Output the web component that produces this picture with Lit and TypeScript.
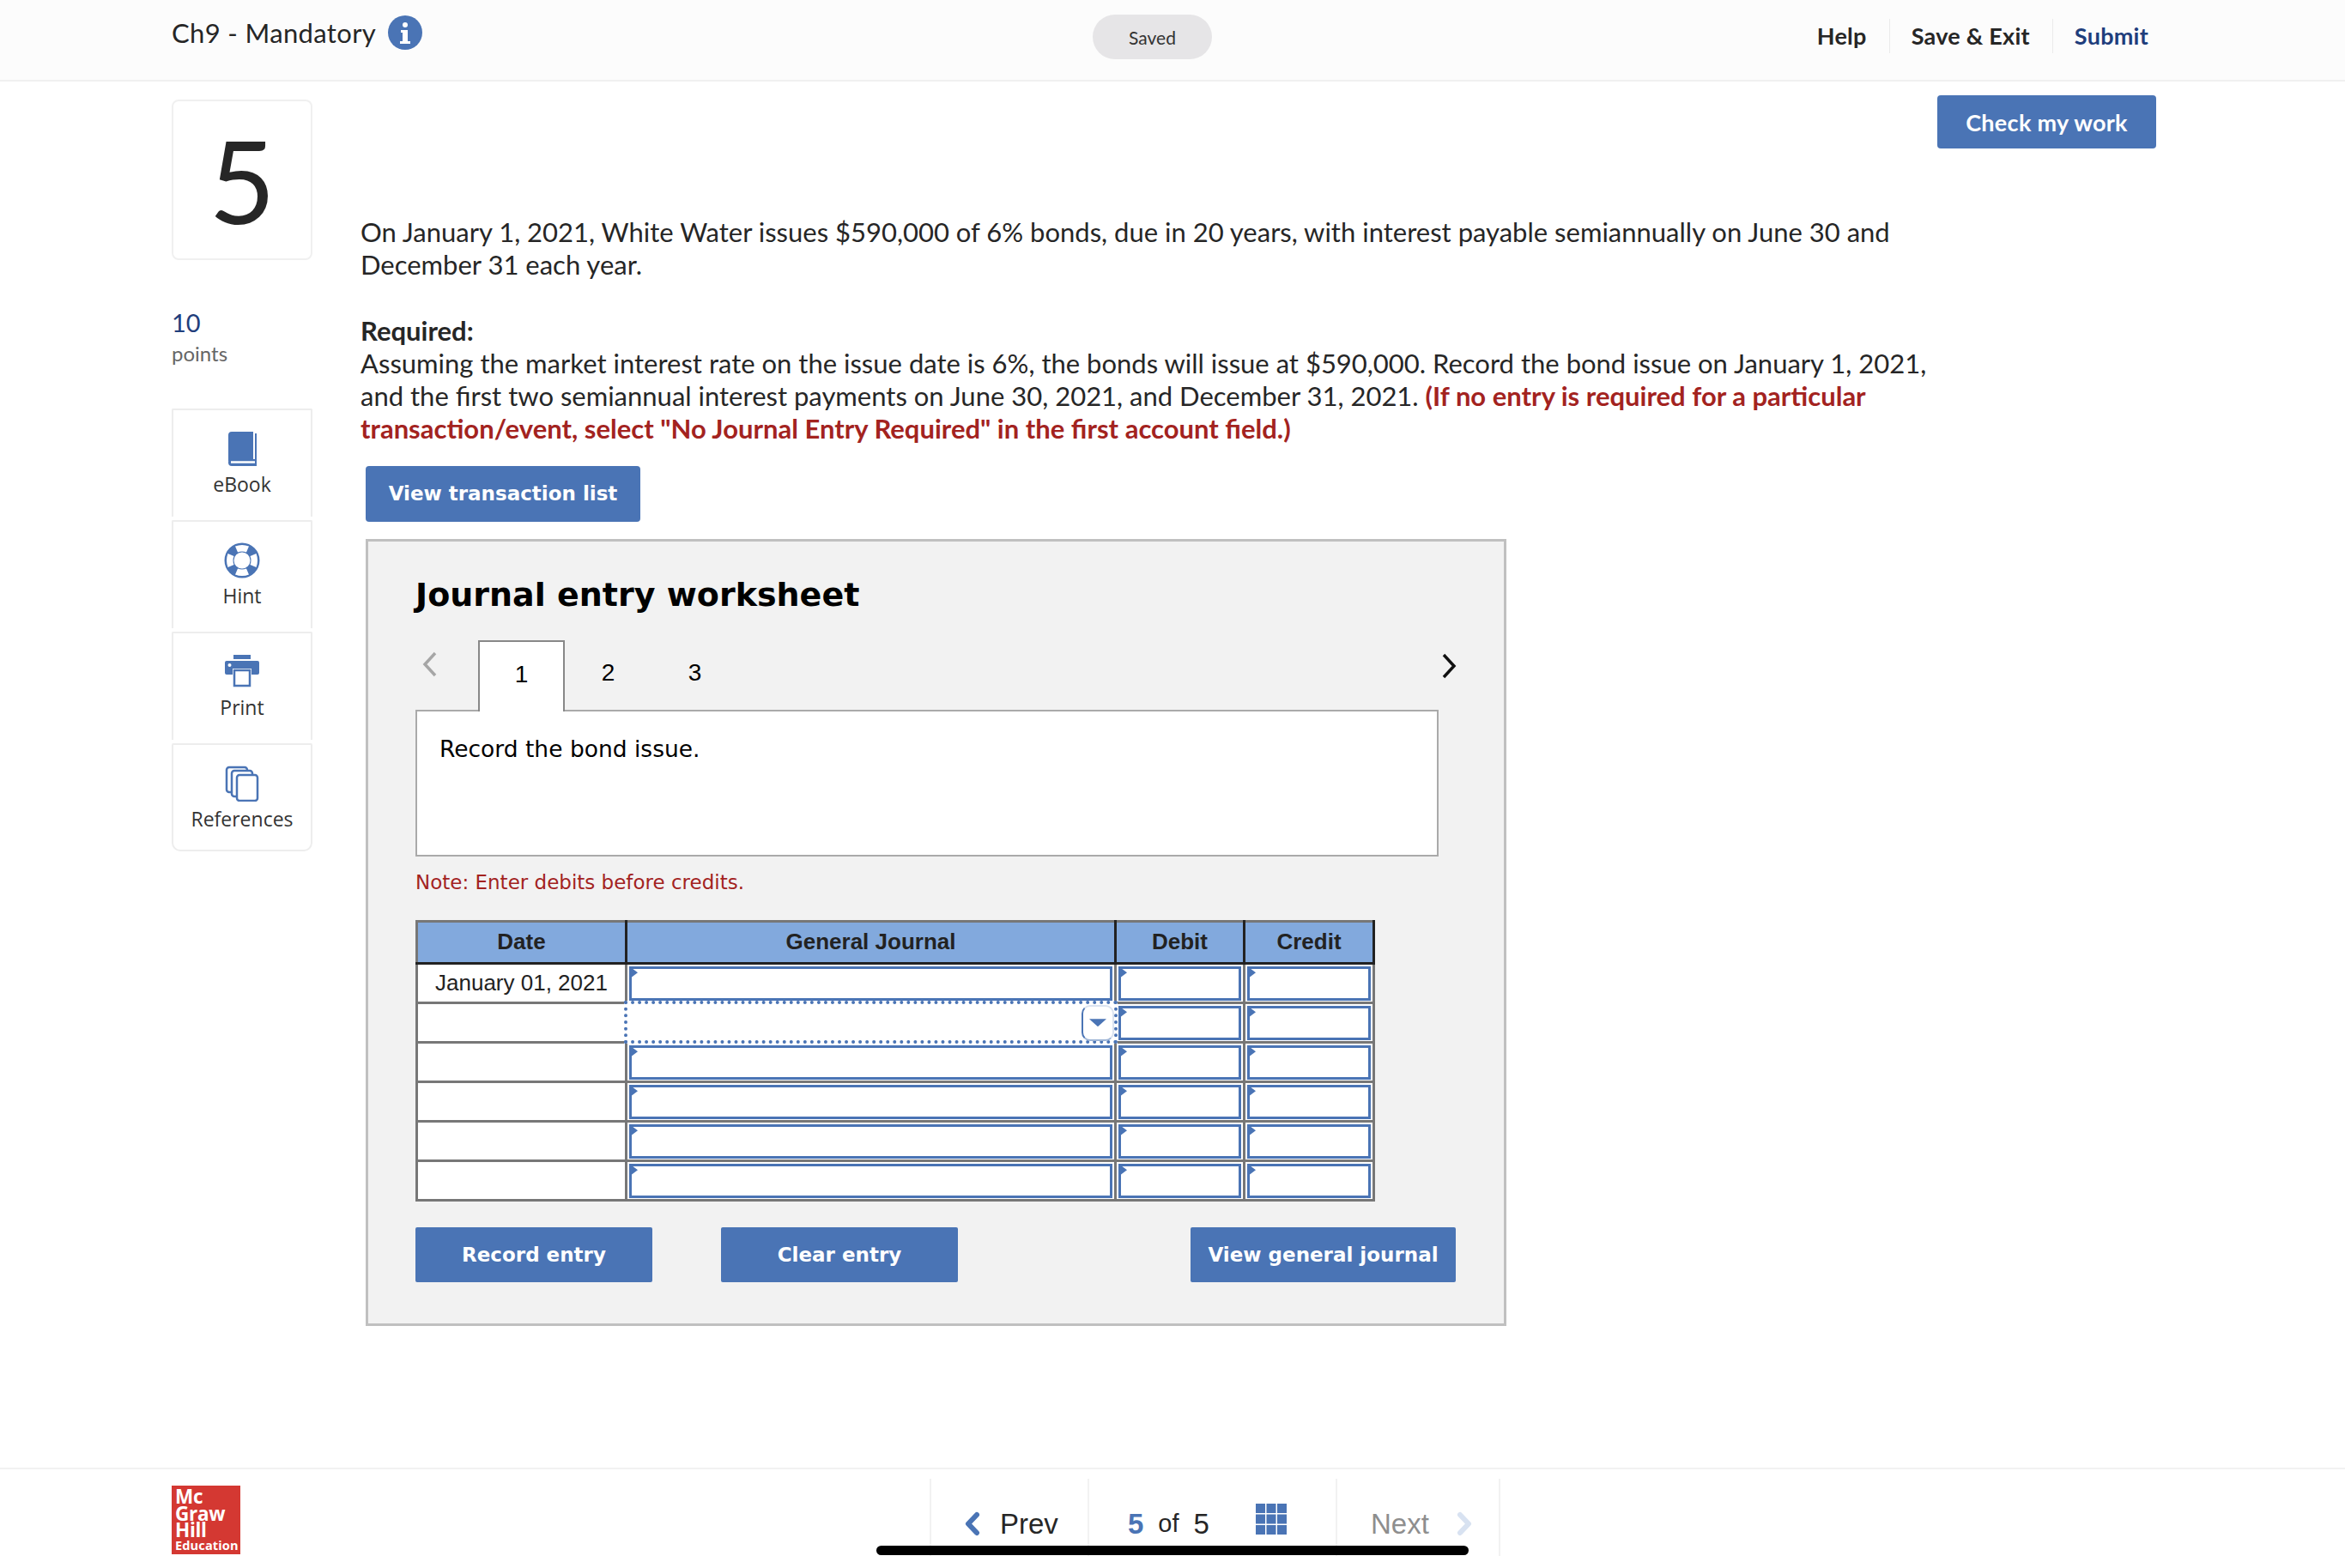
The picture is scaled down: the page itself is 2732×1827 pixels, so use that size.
import { LitElement, html, css, svg } from "lit";
import { customElement } from "lit/decorators.js";

const BLUE = "#4a74b5";
const rows = [0, 1, 2, 3, 4, 5];

@customElement("app-root")
export class AppRoot extends LitElement {
  static styles = css`
    :host { --b: #4a74b5; display: flex; flex-direction: column; width: 2732px; height: 1827px; overflow: hidden; background: #fff; position: relative; font-family: Lato, "Liberation Sans", sans-serif; color: #262626; }
    * { box-sizing: border-box; }
    header { height: 95px; flex: none; background: #fcfcfc; border-bottom: 2px solid #f0f0f0; display: grid; grid-template-columns: 1073px 139px 1fr; padding-left: 200px; padding-top: 17px; align-items: start; }
    .title { display: flex; align-items: center; gap: 14px; font-size: 31px; height: 49px; letter-spacing: 0.35px; margin-top: -4px; }
    .title svg { width: 40px; height: 40px; }
    .saved { height: 52px; border-radius: 26px; background: #e6e5e7; font-size: 21px; display: flex; align-items: center; justify-content: center; color: #333; }
    .hnav { display: flex; justify-content: flex-end; padding-right: 229px; padding-top: 10px; font-size: 27px; font-weight: 700; align-items: center; height: 40px; }
    .hnav span { padding: 0 26px 0 25px; height: 40px; line-height: 40px; border-left: 1px solid #ebebeb; letter-spacing: .25px; }
    .hnav span:first-child { border-left: 0; }
    .hnav span:last-child { color: #1f3e7c; padding-right: 0; }
    main { flex: 1; display: flex; padding-left: 200px; min-height: 0; }
    aside { width: 164px; flex: none; padding-top: 21px; display: flex; flex-direction: column; }
    .num { height: 187px; border: 2px solid #f0f0f0; border-radius: 8px; display: flex; align-items: center; justify-content: center; font-size: 134px; line-height: 1; font-family: Lato, sans-serif; }
    .pts { margin-top: 55px; font-size: 29px; color: #1f3e7c; line-height: 36px; }
    .ptl { font-size: 24px; color: #666; line-height: 36px; }
    .tools { margin-top: 46px; display: flex; flex-direction: column; gap: 4px; }
    .tool { height: 126px; border: 2px solid #ededed; border-bottom: 0; display: flex; flex-direction: column; align-items: center; padding-top: 24px; font-size: 23px; font-family: "Open Sans", sans-serif; color: #333; border-radius: 2px 2px 0 0; }
    .tool:last-child { border-bottom: 2px solid #ededed; border-radius: 2px 2px 10px 10px; }
    .tool svg { width: 42px; height: 42px; flex: none; }
    .tool div { margin-top: 4px; line-height: 32px; }
    .body { width: 2092px; margin-left: 56px; position: relative; }
    .top { display: flex; justify-content: flex-end; padding-top: 16px; height: 156px; padding-right: 0; }
    .check { width: 255px; height: 62px; background: var(--b); color: #fff; border-radius: 4px; font-size: 27px; font-weight: 700; display: flex; align-items: center; justify-content: center; letter-spacing: .3px; }
    p { margin: 0; font-size: 31px; line-height: 38.3px; }
    .q { margin-bottom: 38px; }
    .red { color: #a3231f; font-weight: 700; }
    .vt { margin: 24px 0 20px 6px; width: 320px; height: 65px; background: var(--b); color: #fff; border-radius: 4px; font: 700 23px "DejaVu Sans", sans-serif; display: flex; align-items: center; justify-content: center; }
    .panel { margin-left: 6px; width: 1329px; height: 917px; background: #f2f2f2; border: 3px solid #c0c0c0; padding: 0 0 0 55px; font-family: "DejaVu Sans", sans-serif; color: #000; display: flex; flex-direction: column; }
    h2 { margin: 38px 0 0; font-size: 38px; line-height: 48px; font-weight: 700; height: 48px; }
    .tabs { margin-top: 29px; height: 81px; display: flex; align-items: flex-start; position: relative; z-index: 1; font-family: "Liberation Sans", sans-serif; font-size: 28px; }
    .chev { width: 73px; flex: none; padding: 12px 0 0 6px; }
    .chev svg { display: block; width: 22px; height: 32px; }
    .tab { width: 101px; height: 83px; text-align: center; padding-top: 20px; line-height: 36px; }
    .tab.on { background: #fff; border: 2px solid #888; border-bottom: 0; }
    .nx { margin-left: auto; margin-right: 53px; padding-top: 14px; }
    .nx svg { display: block; width: 22px; height: 32px; }
    .box { width: 1192px; height: 171px; background: #fff; border: 2px solid #aaa; padding: 27px 26px; font-size: 26.5px; line-height: 34px; }
    .note { margin-top: 16px; font-size: 23px; line-height: 28px; color: #a3231f; }
    table { margin-top: 30px; width: 1115px; table-layout: fixed; border-collapse: collapse; font-family: "Liberation Sans", sans-serif; background: #fff; border: 3px solid #777; }
    th { height: 49px; padding: 0; background: #82a9dd; color: #222; font-size: 26px; font-weight: 700; border-right: 3px solid #222; border-bottom: 3px solid #222; }
    td { height: 46px; padding: 0; border: 3px solid #777; font-size: 26px; color: #222; text-align: center; position: relative; }
    .inp { position: absolute; inset: 2px 2px 1px 2px; border: 3px solid var(--b); background: #fff; }
    .inp::before { content: ""; position: absolute; left: -3px; top: -3px; width: 10px; height: 15px; background: var(--b); clip-path: polygon(0 0, 100% 50%, 0 100%); }
    .focus { position: absolute; left: -4px; right: -4px; top: -4px; bottom: -3px; z-index: 2; border: 4px dotted var(--b); background: #fff; }
    .sel { position: absolute; right: 0; top: 1px; width: 38px; height: 42px; border: 2px solid var(--b); border-right-color: #dbe3f0; border-top-color: #dbe3f0; border-bottom-color: #9db4d6; border-radius: 10px; display: flex; align-items: center; justify-content: center; }
    .sel::after { content: ""; width: 20px; height: 9px; background: var(--b); clip-path: polygon(0 0, 100% 0, 50% 100%); }
    .btns { position: relative; margin-top: 30px; display: flex; width: 1212px; }
    .b { height: 64px; background: var(--b); color: #fff; font: 700 23px "DejaVu Sans", sans-serif; display: flex; align-items: center; justify-content: center; border-radius: 2px; width: 276px; }
    .b.c { margin-left: 80px; }
    .b.v { margin-left: auto; width: 309px; }
    footer { height: 117px; flex: none; border-top: 2px solid #f2f2f2; padding: 19px 0 0 200px; display: flex; align-items: flex-start; }
    .logo { width: 80px; height: 80px; background: #d43832; color: #fff; font-family: "Open Sans", sans-serif; font-weight: 700; padding: 3px 0 0 4px; font-size: 22.5px; line-height: 19.5px; letter-spacing: -0.3px; }
    .logo small { display: block; font-size: 14.6px; line-height: 15px; letter-spacing: 0.1px; }
    .pager { margin-left: 803px; margin-top: -8px; display: flex; height: 90px; font-family: "Liberation Sans", sans-serif; font-size: 33px; }
    .cell { border-left: 2px solid #f2f2f2; display: flex; align-items: center; padding-top: 15px; height: 90px; }
    .prev { width: 184px; padding-left: 38px; gap: 22px; }
    .cnt { width: 289px; padding-left: 45px; }
    .cnt b { color: var(--b); }
    .cnt i { font-style: normal; font-size: 29px; margin: 0 17px; }
    .cnt svg { margin-left: 54px; margin-top: -12px; width: 36px; height: 36px; }
    .next { width: 192px; padding-left: 39px; gap: 31px; color: #8e8e8e; border-right: 2px solid #f2f2f2; }
    .cell svg.c { width: 20px; height: 29px; }
    .bar { position: absolute; left: 1021px; top: 1801px; width: 690px; height: 11px; background: #000; border-radius: 6px; }
  `;

  book() {
    return svg`<svg viewBox="0 0 42 42" fill="none"><path d="M5 5a4 4 0 0 1 4-4h25v33H9a4 4 0 0 0-4 2z" fill="${BLUE}"/><path d="M5 36a4 4 0 0 1 4-3h27V3h2v38H9a4 4 0 0 1-4-4z" fill="${BLUE}"/><path d="M8 36.5h28" stroke="#fff" stroke-width="2.5"/></svg>`;
  }
  buoy() {
    return svg`<svg viewBox="0 0 42 42"><circle cx="21" cy="21" r="15" fill="none" stroke="${BLUE}" stroke-width="11"/><g fill="#fff"><path d="M13 4.500q8-3 16 0l-3 7q-5-2-10 0z"/><path d="M13 37.500q8 3 16 0l-3-7q-5 2-10 0z"/><path d="M4.500 13q-3 8 0 16l7-3q-2-5 0-10z"/><path d="M37.500 13q3 8 0 16l-7-3q2-5 0-10z"/></g></svg>`;
  }
  printer() {
    return svg`<svg viewBox="0 0 42 42"><rect x="11" y="1" width="20" height="5" fill="${BLUE}"/><path d="M3 8h36a2 2 0 0 1 2 2v12a2 2 0 0 1-2 2h-7v-7H10v7H3a2 2 0 0 1-2-2V10a2 2 0 0 1 2-2z" fill="${BLUE}"/><circle cx="6.500" cy="13" r="2" fill="#fff"/><rect x="12" y="19" width="18" height="18" fill="#fff" stroke="${BLUE}" stroke-width="2.500"/></svg>`;
  }
  refs() {
    return svg`<svg viewBox="0 0 42 42" fill="#fff" stroke="${BLUE}" stroke-width="2.500"><rect x="3" y="2" width="24" height="29" rx="3"/><rect x="9" y="6" width="24" height="30" rx="3"/><rect x="15" y="11" width="24" height="30" rx="3"/></svg>`;
  }

  render() {
    return html`
      <header>
        <div class="title">Ch9 - Mandatory
          <svg viewBox="0 0 40 40"><circle cx="20" cy="20" r="20" fill="${BLUE}"/><circle cx="20" cy="11" r="3" fill="#fff"/><path d="M15 17h8v13h3v3H14v-3h3v-10h-2z" fill="#fff"/></svg>
        </div>
        <div class="saved">Saved</div>
        <div class="hnav"><span>Help</span><span>Save &amp; Exit</span><span>Submit</span></div>
      </header>
      <main>
        <aside>
          <div class="num">5</div>
          <div class="pts">10</div>
          <div class="ptl">points</div>
          <div class="tools">
            <div class="tool">${this.book()}<div>eBook</div></div>
            <div class="tool">${this.buoy()}<div>Hint</div></div>
            <div class="tool">${this.printer()}<div>Print</div></div>
            <div class="tool">${this.refs()}<div>References</div></div>
          </div>
        </aside>
        <section class="body">
          <div class="top"><div class="check">Check my work</div></div>
          <p class="q">On January 1, 2021, White Water issues $590,000 of 6% bonds, due in 20 years, with interest payable semiannually on June 30 and<br>December 31 each year.</p>
          <p><b>Required:</b><br>Assuming the market interest rate on the issue date is 6%, the bonds will issue at $590,000. Record the bond issue on January 1, 2021,<br>and the first two semiannual interest payments on June 30, 2021, and December 31, 2021. <span class="red">(If no entry is required for a particular<br>transaction/event, select "No Journal Entry Required" in the first account field.)</span></p>
          <div class="vt">View transaction list</div>
          <div class="panel">
            <h2>Journal entry worksheet</h2>
            <div class="tabs">
              <div class="chev"><svg viewBox="0 0 22 32" fill="none" stroke="#a6a6a6" stroke-width="3.500"><path d="M17 3 5 16l12 13"/></svg></div>
              <div class="tab on">1</div><div class="tab">2</div><div class="tab">3</div>
              <div class="nx"><svg viewBox="0 0 22 32" fill="none" stroke="#111" stroke-width="3.500"><path d="M5 3l12 13L5 29"/></svg></div>
            </div>
            <div class="box">Record the bond issue.</div>
            <div class="note">Note: Enter debits before credits.</div>
            <table>
              <colgroup><col style="width:244px"><col style="width:570px"><col style="width:150px"><col style="width:151px"></colgroup>
              <thead><tr><th>Date</th><th>General Journal</th><th>Debit</th><th>Credit</th></tr></thead>
              <tbody>
                ${rows.map((i) => html`<tr>
                  <td>${i === 0 ? "January 01, 2021" : ""}</td>
                  <td>${i === 1 ? html`<div class="focus"><div class="sel"></div></div>` : html`<div class="inp"></div>`}</td>
                  <td><div class="inp"></div></td>
                  <td><div class="inp"></div></td>
                </tr>`)}
              </tbody>
            </table>
            <div class="btns"><div class="b">Record entry</div><div class="b c">Clear entry</div><div class="b v">View general journal</div></div>
          </div>
        </section>
      </main>
      <footer>
        <div class="logo">Mc<br>Graw<br>Hill<small>Education</small></div>
        <div class="pager">
          <div class="cell prev"><svg class="c" viewBox="0 0 20 29" fill="none" stroke="${BLUE}" stroke-width="6" stroke-linecap="round" stroke-linejoin="round"><path d="M15 4 5 14.500 15 25"/></svg>Prev</div>
          <div class="cell cnt"><b>5</b><i>of</i>5<svg viewBox="0 0 36 36" fill="${BLUE}">${[0, 1, 2].map((r) => [0, 1, 2].map((c) => svg`<rect x="${c * 12.5}" y="${r * 12.5}" width="11" height="11"/>`))}</svg></div>
          <div class="cell next">Next<svg class="c" viewBox="0 0 20 29" fill="none" stroke="#d8e2f1" stroke-width="6" stroke-linecap="round" stroke-linejoin="round"><path d="M5 4l10 10.500L5 25"/></svg></div>
        </div>
      </footer>
      <div class="bar"></div>
    `;
  }
}
